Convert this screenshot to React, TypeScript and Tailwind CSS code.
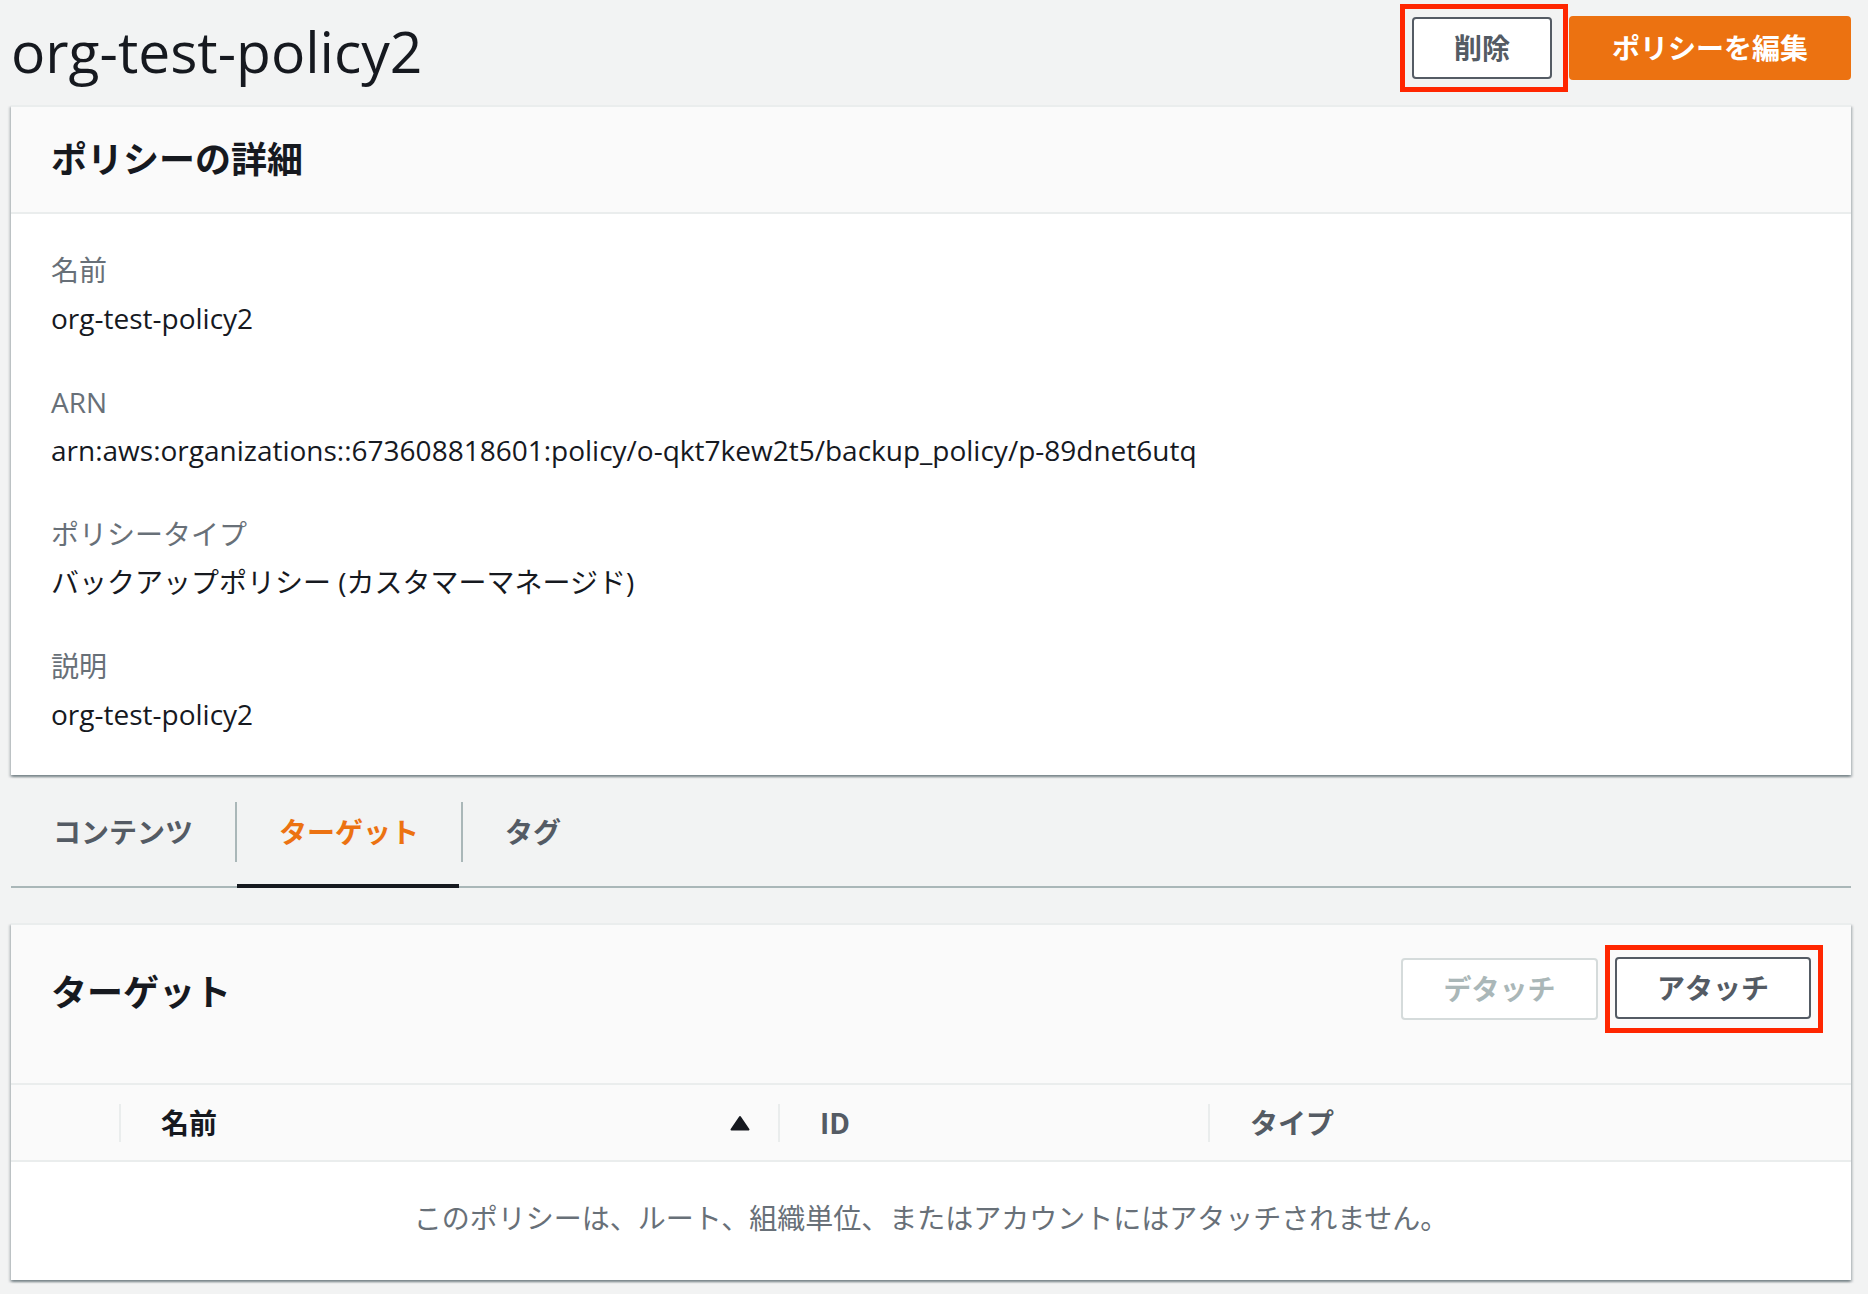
import React from 'react';

const Highlight: React.FC<{ children: React.ReactNode; className?: string }> = ({ children, className }) => (
  <div className={`border-[5px] border-[#ff2600] ${className ?? ''}`}>{children}</div>
);

const fields = [
  { label: '名前', value: 'org-test-policy2' },
  { label: 'ARN', value: 'arn:aws:organizations::673608818601:policy/o-qkt7kew2t5/backup_policy/p-89dnet6utq' },
  { label: 'ポリシータイプ', value: 'バックアップポリシー (カスタマーマネージド)' },
  { label: '説明', value: 'org-test-policy2' },
];

const tabs = ['コンテンツ', 'ターゲット', 'タグ'];

const SortUpIcon: React.FC = () => (
  <svg width="20" height="16" viewBox="0 0 20 16" className="text-[#16191f]">
    <path d="M10 2 L18.5 14.5 H1.5 Z" fill="currentColor" stroke="currentColor" strokeWidth={2} strokeLinejoin="round" />
  </svg>
);

const cardShadow =
  'shadow-[0_2px_2px_0_rgba(0,28,36,0.3),2px_2px_2px_0_rgba(0,28,36,0.15),-2px_2px_2px_0_rgba(0,28,36,0.15)]';

export default function App() {
  const activeTab = 1;

  return (
    <div className="min-h-screen bg-[#f2f3f3] pl-[11px] pr-[17px] pb-[14px] font-['Open_Sans','Noto_Sans_CJK_JP',sans-serif] text-[#16191f]">
      {/* page header */}
      <div className="flex items-center justify-between pt-[4px] pb-[13px]">
        <h1 className="mt-[6px] text-[57px] leading-none font-normal text-[#16191f]">org-test-policy2</h1>
        <div className="flex items-center">
          <Highlight className="pl-[7px] pr-[11px] py-[8px]">
            <button className="h-[62px] w-[140px] rounded-[4px] border-2 border-[#545b64] bg-white text-[28px] font-bold text-[#545b64]">
              削除
            </button>
          </Highlight>
          <button className="ml-px h-[64px] w-[282px] rounded-[4px] bg-[#ec7211] text-[28px] font-bold text-white">
            ポリシーを編集
          </button>
        </div>
      </div>

      {/* details card */}
      <div className={`border-t-2 border-[#eaeded] bg-white ${cardShadow}`}>
        <div className="flex h-[107px] items-center border-b-2 border-[#eaeded] bg-[#fafafa] px-[40px]">
          <h2 className="text-[36px] font-bold leading-none">ポリシーの詳細</h2>
        </div>
        <div className="flex flex-col gap-[40px] px-[40px] pt-[34px] pb-[39px]">
          {fields.map((f) => (
            <div key={f.label}>
              <div className="text-[28px] leading-[44px] text-[#687078]">{f.label}</div>
              <div className="mt-[4px] text-[28px] leading-[44px] text-[#16191f]">{f.value}</div>
            </div>
          ))}
        </div>
      </div>

      {/* tabs */}
      <div className="mt-[27px] flex border-b-2 border-[#aab7b8]">
        {tabs.map((t, i) => (
          <div key={t} className="-mb-[2px] flex flex-col">
            <div
              className={`flex h-[60px] items-center px-[42px] text-[28px] font-bold ${
                i > 0 ? 'border-l-2 border-[#aab7b8]' : ''
              } ${i === activeTab ? 'text-[#ec7211]' : 'text-[#545b64]'}`}
            >
              {t}
            </div>
            <div className={`mx-[2px] mt-[22px] h-[4px] ${i === activeTab ? 'bg-[#16191f]' : 'bg-transparent'}`} />
          </div>
        ))}
      </div>

      {/* targets card */}
      <div className={`mt-[35px] border-t-2 border-[#eaeded] bg-white ${cardShadow}`}>
        <div className="flex items-center justify-between border-b-2 border-[#eaeded] bg-[#fafafa] pl-[40px] pr-[28px] pt-[20px] pb-[50px]">
          <h2 className="mt-[8px] text-[36px] font-bold leading-none">ターゲット</h2>
          <div className="flex items-center">
            <button className="mr-[7px] h-[62px] w-[197px] rounded-[4px] border-2 border-[#d5dbdb] bg-white text-[28px] font-bold text-[#aab7b8]">
              デタッチ
            </button>
            <Highlight className="pl-[5px] pr-[7px] pt-[7px] pb-[9px]">
              <button className="h-[62px] w-[196px] rounded-[4px] border-2 border-[#545b64] bg-white text-[28px] font-bold text-[#545b64]">
                アタッチ
              </button>
            </Highlight>
          </div>
        </div>

        <div className="grid h-[77px] grid-cols-[108px_659px_430px_1fr] items-center border-b-2 border-[#eaeded] bg-[#fafafa] text-[28px] font-bold">
          <div />
          <div className="flex h-[38px] items-center justify-between border-l-2 border-[#eaeded] pl-[40px] pr-[28px] text-[#16191f]">
            <span>名前</span>
            <SortUpIcon />
          </div>
          <div className="flex h-[38px] items-center border-l-2 border-[#eaeded] pl-[40px] text-[#545b64]">ID</div>
          <div className="flex h-[38px] items-center border-l-2 border-[#eaeded] pl-[40px] text-[#545b64]">タイプ</div>
        </div>

        <div className="flex h-[118px] items-center justify-center pb-[6px] text-[28px] text-[#687078]">
          このポリシーは、ルート、組織単位、またはアカウントにはアタッチされません。
        </div>
      </div>
    </div>
  );
}
